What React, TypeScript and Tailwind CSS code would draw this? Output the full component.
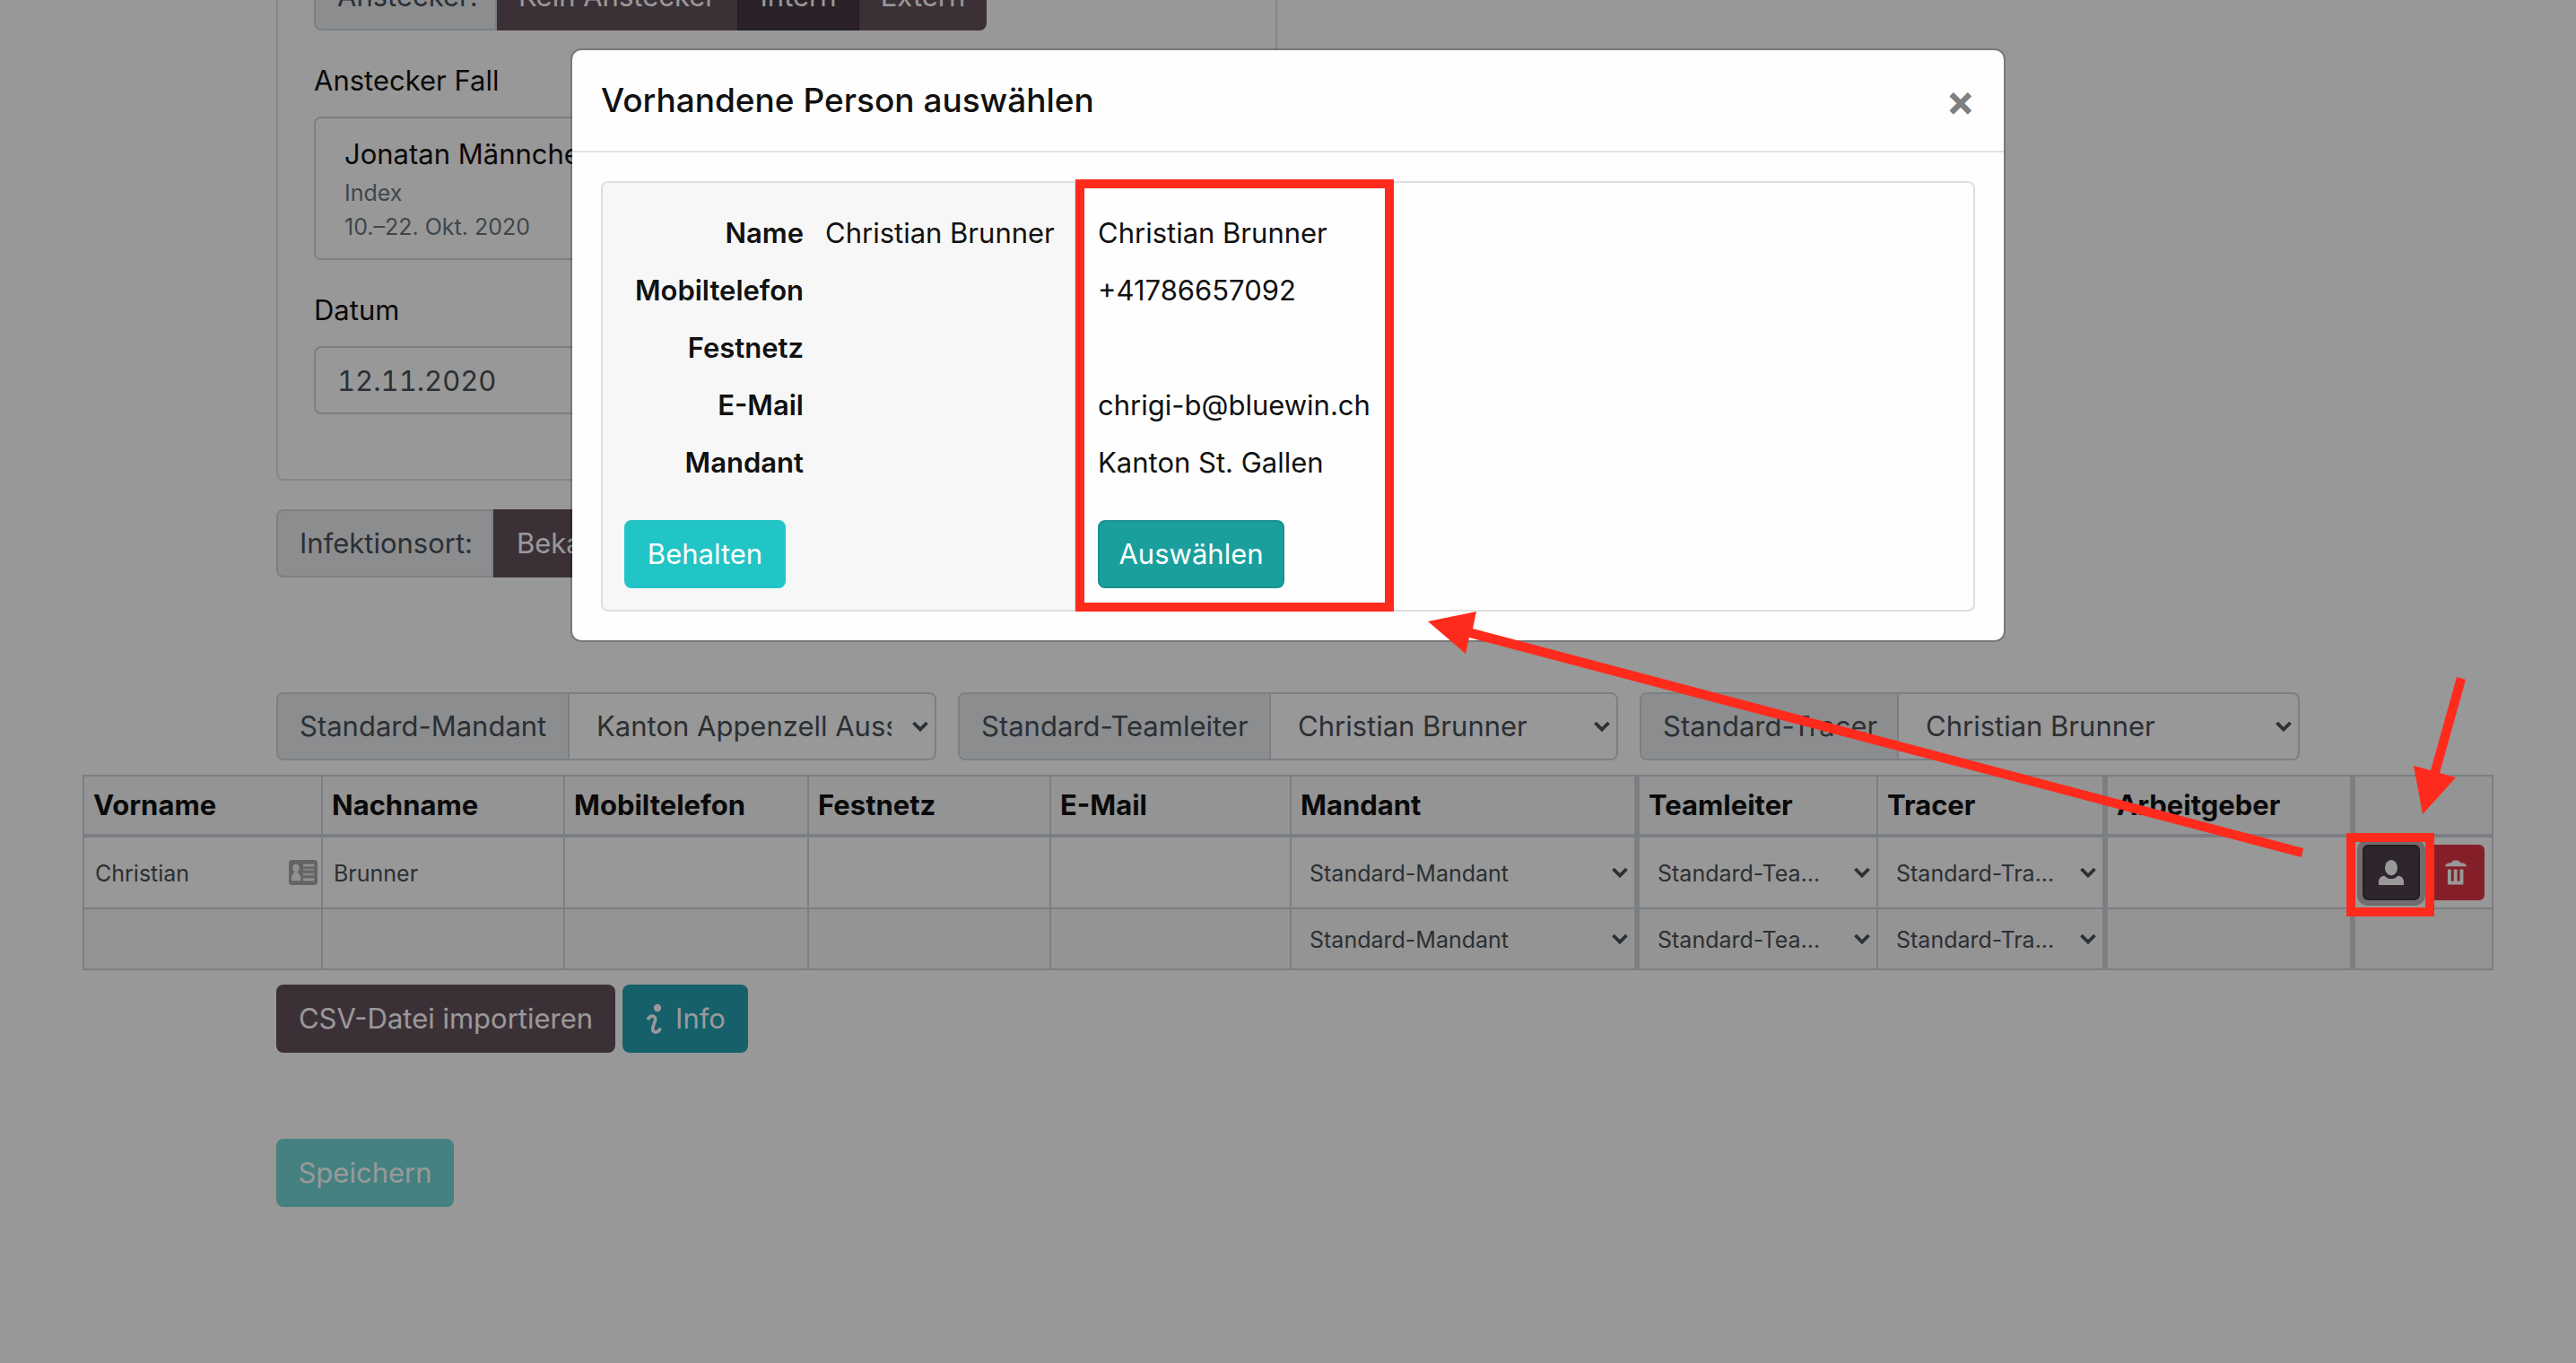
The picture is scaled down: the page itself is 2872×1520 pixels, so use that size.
import React from "react";

const INPUT_BORDER = "border-[#ced4da]";

function Chevron() {
  return (
    <svg
      viewBox="0 0 20 12"
      aria-hidden="true"
      className="pointer-events-none absolute top-1/2 right-1.5 h-3 w-5 -translate-y-1/2"
    >
      <path d="M2.5 2 L10 9.5 L17.5 2" fill="none" stroke="#495057" strokeWidth="3.8" />
    </svg>
  );
}

function PersonIcon() {
  return (
    <svg viewBox="0 0 84 84" aria-hidden="true" className="size-7 fill-white">
      <ellipse cx="42" cy="26" rx="21" ry="26" />
      <path d="M0 84 V74 C0 60 9 53 20 53 C26 60 33 63 42 63 C51 63 58 60 64 53 C75 53 84 60 84 74 V84 Z" />
    </svg>
  );
}

function TrashIcon() {
  return (
    <svg viewBox="0 0 74 84" aria-hidden="true" className="h-7 w-6 fill-white">
      <path d="M0 21 C1 14 8 9 18 9 H22 C23 3 27 0 32 0 H42 C47 0 51 3 52 9 H56 C66 9 73 14 74 21 Z" />
      <path d="M9 31 H21 V68 C21 74 30 74 30 68 V31 H42 V68 C42 74 51 74 51 68 V31 H63 V84 H9 Z" />
    </svg>
  );
}

function InfoIcon() {
  return (
    <svg viewBox="0 0 20 34" aria-hidden="true" className="h-[34px] w-5">
      <circle cx="14" cy="5" r="4.2" fill="#fff" />
      <path
        d="M3 18 Q6 13 10 14.5 Q13 16 10.5 22 Q6.5 31 11.5 32 Q16 32 17 27.5"
        fill="none"
        stroke="#fff"
        strokeWidth="3.6"
      />
    </svg>
  );
}

function ContactCardIcon() {
  return (
    <svg
      viewBox="0 0 96 84"
      aria-hidden="true"
      className="pointer-events-none absolute top-1/2 right-1 h-7 w-8 -translate-y-1/2"
    >
      <rect width="96" height="84" rx="11" fill="#a6a6a6" />
      <ellipse cx="24" cy="27" rx="11" ry="13" fill="#f2f2f2" />
      <path d="M9 70 V60 C10 48 17 46 20 38 H28 C31 46 39 48 40 60 V70 Z" fill="#f2f2f2" />
      <rect x="48" y="14" width="37" height="8" fill="#f2f2f2" />
      <rect x="48" y="29" width="37" height="7" fill="#d5d5d5" />
      <rect x="48" y="44" width="37" height="8" fill="#dedede" />
      <rect x="48" y="61" width="37" height="9" fill="#f2f2f2" />
    </svg>
  );
}

type GroupProps = { id: string; label: string; value: string; labelClass: string };

function SelectGroup({ id, label, value, labelClass }: GroupProps) {
  return (
    <div className={`flex h-[76px] rounded-lg border-2 ${INPUT_BORDER} text-[#495057]`}>
      <label
        htmlFor={id}
        className={`flex shrink-0 items-center rounded-l-md border-r-2 ${INPUT_BORDER} bg-[#e9ecef] pl-6 ${labelClass}`}
      >
        {label}
      </label>
      <div className="relative min-w-0 grow">
        <select id={id} className="h-full w-full appearance-none bg-transparent pr-12 pl-[30px]">
          <option>{value}</option>
        </select>
        <Chevron />
      </div>
    </div>
  );
}

function CellSelect({ label, value }: { label: string; value: string }) {
  return (
    <div className="relative">
      <select
        aria-label={label}
        className="h-12 w-full appearance-none bg-transparent pr-8 pb-0.5 pl-5 text-[25px] text-[#495057]"
      >
        <option>{value}</option>
      </select>
      <Chevron />
    </div>
  );
}

function CellInput({ label, value }: { label: string; value: string }) {
  return (
    <input
      aria-label={label}
      defaultValue={value}
      className="h-12 w-full bg-transparent px-3 pb-0.5 text-[25px] text-[#495057] outline-none"
    />
  );
}

const columns = [
  { title: "Vorname", col: "w-[266px]", edge: "border-r-2" },
  { title: "Nachname", col: "w-[270px]", edge: "border-r-2" },
  { title: "Mobiltelefon", col: "w-[272px]", edge: "border-r-2" },
  { title: "Festnetz", col: "w-[270px]", edge: "border-r-2" },
  { title: "E-Mail", col: "w-[268px]", edge: "border-r-2" },
  { title: "Mandant", col: "w-[388px]", edge: "border-r-6" },
  { title: "Teamleiter", col: "w-[266px]", edge: "border-r-2" },
  { title: "Tracer", col: "w-[256px]", edge: "border-r-6" },
  { title: "Arbeitgeber", col: "w-[276px]", edge: "border-r-6" },
  { title: "", col: "w-[154px]", edge: "border-r-2" },
];

const selectValues: Record<string, string> = {
  Mandant: "Standard-Mandant",
  Teamleiter: "Standard-Tea...",
  Tracer: "Standard-Tra...",
};

const people = [
  { Vorname: "Christian", Nachname: "Brunner", filled: true },
  { Vorname: "", Nachname: "", filled: false },
];

function PeopleTable() {
  return (
    <table
      className={`w-full table-fixed border-separate border-spacing-0 border-t-2 border-l-2 ${INPUT_BORDER}`}
    >
      <colgroup>
        {columns.map((c, i) => (
          <col key={i} className={c.col} />
        ))}
      </colgroup>
      <thead>
        <tr className="h-[68px] bg-[#f7f7f7]">
          {columns.map((c, i) => (
            <th
              key={i}
              className={`border-b-4 ${c.edge} ${INPUT_BORDER} px-2.5 text-left font-bold whitespace-nowrap`}
            >
              {c.title}
            </th>
          ))}
        </tr>
      </thead>
      <tbody>
        {people.map((p, r) => (
          <tr key={r} className={p.filled ? "h-20" : "h-[68px] bg-[#f7f7f7]"}>
            {columns.map((c, i) => (
              <td key={i} className={`border-b-2 ${c.edge} ${INPUT_BORDER} p-0`}>
                {c.title === "" ? (
                  p.filled && (
                    <div className="grid grid-cols-2 gap-2 px-2">
                      <div className="relative">
                        <button
                          aria-label="Person"
                          className="flex h-[62px] w-full items-center justify-center rounded-md border-2 border-[#3f333c] bg-[#4e3f4b] ring-6 ring-[#bdb6ba]"
                        >
                          <PersonIcon />
                        </button>
                        <div className="pointer-events-none absolute -top-[13px] -right-4 -bottom-[18px] -left-[18px] z-20 border-10 border-[#fe2b1d]" />
                      </div>
                      <button
                        aria-label="Löschen"
                        className="flex h-[62px] items-center justify-center rounded-md bg-[#dc3545]"
                      >
                        <TrashIcon />
                      </button>
                    </div>
                  )
                ) : selectValues[c.title] ? (
                  <CellSelect label={c.title} value={selectValues[c.title]} />
                ) : (
                  <div className="relative">
                    <CellInput
                      label={c.title}
                      value={c.title === "Vorname" ? p.Vorname : c.title === "Nachname" ? p.Nachname : ""}
                    />
                    {p.filled && c.title === "Vorname" && <ContactCardIcon />}
                  </div>
                )}
              </td>
            ))}
          </tr>
        ))}
      </tbody>
    </table>
  );
}

const fields = ["Name", "Mobiltelefon", "Festnetz", "E-Mail", "Mandant"];
const existing = ["Christian Brunner", "+41786657092", "", "chrigi-b@bluewin.ch", "Kanton St. Gallen"];

function PersonDialog() {
  return (
    <div
      role="dialog"
      aria-labelledby="dialog-title"
      className="w-full max-w-[1600px] rounded-xl border-2 border-black/20 bg-[#fefefe] bg-clip-padding"
    >
      <div className="flex items-center justify-between border-b-2 border-[#dee2e6] p-8">
        <h5 id="dialog-title" className="text-[37px] leading-12 font-medium">
          Vorhandene Person auswählen
        </h5>
        <button aria-label="Schliessen" className="text-[48px] leading-12 font-bold text-[#7f7f7f]">
          ×
        </button>
      </div>
      <div className="p-8">
        <div className="flex rounded-lg border-2 border-[#dfdfdf]">
          <div className="w-[528px] shrink-0 rounded-l-md border-r-2 border-[#dfdfdf] bg-[#f7f7f7] p-6">
            <dl className="grid grid-cols-[200px_1fr] gap-x-6">
              {fields.map((f, i) => (
                <React.Fragment key={f}>
                  <dt className="h-16 text-right leading-16 font-semibold">{f}</dt>
                  <dd className="h-16 leading-16 whitespace-nowrap">{i === 0 ? "Christian Brunner" : ""}</dd>
                </React.Fragment>
              ))}
            </dl>
            <button className="mt-8 h-[76px] w-[180px] rounded-lg bg-[#22c5c5] text-white">Behalten</button>
          </div>
          <div className="relative w-[352px] shrink-0 p-6">
            {existing.map((v, i) => (
              <div key={fields[i]} className="h-16 leading-16 whitespace-nowrap">
                {v}
              </div>
            ))}
            <button className="mt-8 h-[76px] w-52 rounded-lg border-2 border-[#18928f] bg-[#1a9f9e] text-white">
              Auswählen
            </button>
            <div className="pointer-events-none absolute -top-1 -right-0.5 -bottom-0.5 -left-px border-10 border-[#fe2b1d]" />
          </div>
        </div>
      </div>
    </div>
  );
}

function Arrows() {
  return (
    <svg
      viewBox="0 0 2872 1520"
      aria-hidden="true"
      className="pointer-events-none absolute inset-x-0 top-0 z-30 w-full fill-[#fe2b1d]"
    >
      <path d="M1592 693 L1646 682 L1642 701 L2568 946 L2566 956 L1638 711 L1634 729 Z" />
      <path d="M2701 908 L2691 854 L2710 859 L2739 755 L2749 758 L2720 862 L2738 867 Z" />
    </svg>
  );
}

export default function App() {
  return (
    <div className="relative min-h-screen overflow-hidden bg-[#fefefe] font-['Inter',sans-serif] text-[31px] leading-12 text-[#111]">
      <main className="-mt-[42px]">
        <div className="mx-auto max-w-[2256px]">
          <div className="grid grid-cols-2 gap-6">
            <section className="rounded-b-lg border-x-2 border-b-2 border-[#dfdfdf] px-10 pb-[72px]">
              <div className="flex h-[76px] items-stretch text-white">
                <span
                  className={`flex w-[204px] items-center rounded-l-lg border-2 ${INPUT_BORDER} bg-[#e9ecef] pl-6 text-[#495057]`}
                >
                  Anstecker:
                </span>
                <button className="w-[268px] bg-[#65515d]">Kein Anstecker</button>
                <button className="w-[136px] border-2 border-[#3f333c] bg-[#473943]">Intern</button>
                <button className="w-[142px] rounded-r-lg bg-[#65515d]">Extern</button>
              </div>
              <h6 className="mt-8 mb-4">Anstecker Fall</h6>
              <div className="rounded-lg border-2 border-[#d6d6d6] px-8 py-4">
                <div>Jonatan Männchen</div>
                <div className="text-[25px] leading-[38px] text-[#6c757d]">Index</div>
                <div className="text-[25px] leading-[38px] text-[#6c757d]">10.–22. Okt. 2020</div>
              </div>
              <label htmlFor="datum" className="mt-8 mb-4 block">
                Datum
              </label>
              <input
                id="datum"
                defaultValue="12.11.2020"
                className={`block h-[76px] w-full rounded-lg border-2 ${INPUT_BORDER} px-6 text-[#495057] tabular-nums outline-none`}
              />
            </section>
          </div>

          <div className="mt-8 flex h-[76px]">
            <span
              className={`flex w-[242px] items-center rounded-l-lg border-2 ${INPUT_BORDER} bg-[#e9ecef] pl-6 text-[#495057]`}
            >
              Infektionsort:
            </span>
            <button className="rounded-r-lg bg-[#65515d] px-[26px] text-white">Bekannt</button>
          </div>

          <div className="mt-32 mb-4 grid grid-cols-3 gap-6">
            <SelectGroup
              id="mandant"
              label="Standard-Mandant"
              value="Kanton Appenzell Ausserrhoden"
              labelClass="w-[325px]"
            />
            <SelectGroup id="leiter" label="Standard-Teamleiter" value="Christian Brunner" labelClass="w-[347px]" />
            <SelectGroup id="tracer" label="Standard-Tracer" value="Christian Brunner" labelClass="w-[287px]" />
          </div>
        </div>

        <div className="mx-auto max-w-[2688px]">
          <PeopleTable />
        </div>

        <div className="mx-auto mt-4 max-w-[2256px] text-white">
          <div className="flex gap-2">
            <button className="h-[76px] w-[378px] rounded-lg bg-[#65515d]">CSV-Datei importieren</button>
            <button className="flex h-[76px] w-[140px] items-center justify-center gap-3.5 rounded-lg bg-[#24a0b1]">
              <InfoIcon />
              Info
            </button>
          </div>
          <button className="mt-24 h-[76px] w-[198px] rounded-lg bg-[#72d7d5]">Speichern</button>
        </div>
      </main>

      <div className="absolute inset-0 z-10 flex items-start justify-center bg-black/40 pt-[54px]">
        <PersonDialog />
      </div>
      <Arrows />
    </div>
  );
}
